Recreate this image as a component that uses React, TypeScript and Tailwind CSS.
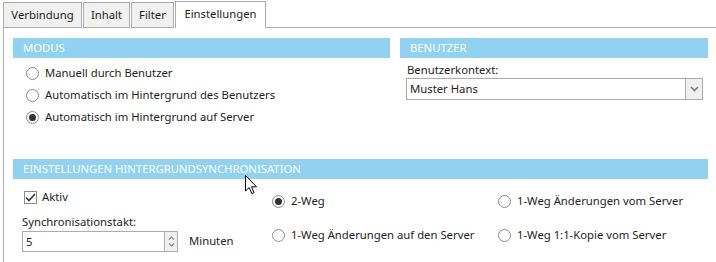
import React from 'react';

const font = { fontFamily: '"Noto Sans", "Open Sans", sans-serif' };

function Radio({ label, checked = false }: { label: string; checked?: boolean }) {
  return (
    <div className="flex items-center h-[22px] gap-[6px]">
      <span className="w-[13px] h-[13px] rounded-full border border-[#8c8c8c] bg-white flex items-center justify-center">
        {checked && <span className="w-[7px] h-[7px] rounded-full bg-[#333]" />}
      </span>
      <span>{label}</span>
    </div>
  );
}

function Header({ children }: { children: React.ReactNode }) {
  return (
    <div className="h-[20px] bg-[#91d2f1] text-[#fbfdff] pl-[10px] leading-[20px] whitespace-nowrap">
      {children}
    </div>
  );
}

function Tab({ label, active = false, w }: { label: string; active?: boolean; w: string }) {
  if (active) {
    return (
      <div className={`${w} h-[27px] border-x border-t border-[#acacac] bg-white flex items-center justify-center pb-[1px]`}>
        {label}
      </div>
    );
  }
  return (
    <div className={`${w} h-[26px] border border-[#acacac] bg-[#f0f0f0] flex items-center justify-center mr-[1px]`}>
      {label}
    </div>
  );
}

export default function App() {
  return (
    <div className="relative w-[716px] h-[262px] bg-white overflow-hidden text-[11.3px] text-[#1e1e1e]" style={font}>
      <div className="flex items-end h-[28px] pl-[3px]">
        <Tab label="Verbindung" w="w-[79px]" />
        <Tab label="Inhalt" w="w-[47px]" />
        <Tab label="Filter" w="w-[43px]" />
        <Tab label="Einstellungen" active w="w-[91px]" />
        <div className="flex-1 border-b border-[#acacac]" />
      </div>

      <div className="ml-[3px] border-l border-[#acacac] h-[234px] pl-[9px] pr-[8px] pt-[10px]">
        <div className="flex gap-[10px]">
          <div className="w-[377px]">
            <Header>MODUS</Header>
            <div className="pl-[13px] pt-[4px]">
              <Radio label="Manuell durch Benutzer" />
              <Radio label="Automatisch im Hintergrund des Benutzers" />
              <Radio label="Automatisch im Hintergrund auf Server" checked />
            </div>
          </div>
          <div className="flex-1">
            <Header>BENUTZER</Header>
            <div className="pl-[6px] pr-[5px] pt-[3px]">
              <div className="pl-[1px] h-[17px] leading-[17px]">Benutzerkontext:</div>
              <div className="flex h-[22px] border border-[#acacac] bg-white">
                <div className="flex-1 pl-[3px] leading-[20px]">Muster Hans</div>
                <div className="w-[17px] border-l border-[#acacac] bg-[#f0f0f0] flex items-center justify-center">
                  <svg width="9" height="6" viewBox="0 0 9 6">
                    <path d="M1 1 L4.5 4.5 L8 1" fill="none" stroke="#7a7a7a" strokeWidth="1.6" />
                  </svg>
                </div>
              </div>
            </div>
          </div>
        </div>

        <div className="mt-[31px]">
          <Header>EINSTELLUNGEN HINTERGRUNDSYNCHRONISATION</Header>
          <div className="flex pt-[10px]">
            <div className="w-[259px] pl-[9px]">
              <div className="flex items-center gap-[5px] h-[17px] pl-[2px]">
                <span className="w-[13px] h-[13px] border border-[#8c8c8c] bg-white flex items-center justify-center">
                  <svg width="11" height="9" viewBox="0 0 11 9">
                    <path d="M1 4.5 L4 7.5 L10 1" fill="none" stroke="#333" strokeWidth="1.6" />
                  </svg>
                </span>
                <span>Aktiv</span>
              </div>
              <div className="mt-[7px] h-[17px] leading-[17px]">Synchronisationstakt:</div>
              <div className="flex items-center gap-[11px] mt-[1px]">
                <div className="w-[156px] h-[21px] border border-[#acacac] flex">
                  <div className="flex-1 pl-[3px] leading-[19px]">5</div>
                  <div className="w-[13px] border-l border-[#acacac] bg-[#f0f0f0] flex flex-col items-center justify-center gap-[3px]">
                    <svg width="7" height="4" viewBox="0 0 7 4">
                      <path d="M1 3.5 L3.5 1 L6 3.5" fill="none" stroke="#8a8a8a" strokeWidth="1.2" />
                    </svg>
                    <svg width="7" height="4" viewBox="0 0 7 4">
                      <path d="M1 0.5 L3.5 3 L6 0.5" fill="none" stroke="#8a8a8a" strokeWidth="1.2" />
                    </svg>
                  </div>
                </div>
                <span>Minuten</span>
              </div>
            </div>
            <div className="grid grid-cols-[226px_1fr] pt-[1px]">
              <Radio label="2-Weg" checked />
              <Radio label="1-Weg Änderungen vom Server" />
              <div className="mt-[6px]"><Radio label="1-Weg Änderungen auf den Server" /></div>
              <div className="mt-[6px]"><Radio label="1-Weg 1:1-Kopie vom Server" /></div>
            </div>
          </div>
        </div>
      </div>

      <svg className="absolute left-[245px] top-[175px]" width="13" height="20" viewBox="0 0 13 20">
        <path d="M0.5 0.5 L0.5 16 L4.2 12.6 L6.8 18.6 L9 17.6 L6.5 11.8 L11.5 11.8 Z" fill="white" stroke="black" strokeWidth="1" strokeLinejoin="miter" />
      </svg>
    </div>
  );
}
